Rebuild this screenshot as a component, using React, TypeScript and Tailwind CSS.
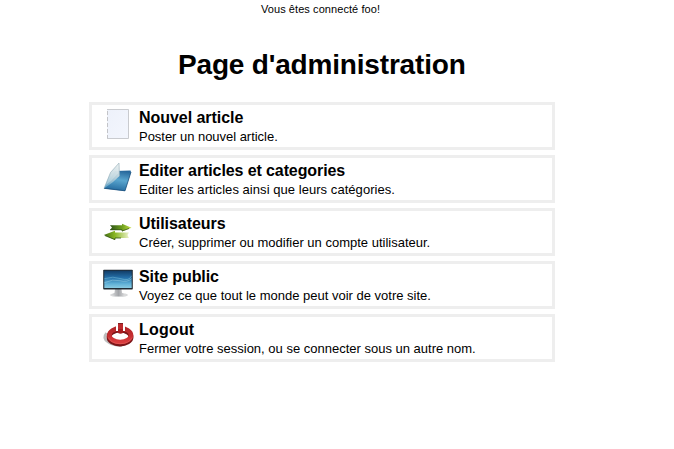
import type { ReactNode } from 'react';

function PageIcon() {
  return (
    <svg viewBox="0 0 30 32" className="h-8 w-[30px]">
      <defs>
        <linearGradient id="paper" x1="0" y1="0" x2="1" y2="1">
          <stop offset="0" stopColor="#edf1fa" />
          <stop offset="1" stopColor="#f3f6fd" />
        </linearGradient>
      </defs>
      <rect x="4" y="2" width="22" height="29" fill="url(#paper)" />
      <path d="M4 2.5H25.5V31.5H4" fill="none" stroke="#c9cbcf" strokeWidth="1" />
      <path d="M4.5 4V31" stroke="#c3c4c8" strokeWidth="1" strokeDasharray="4 2" />
    </svg>
  );
}

function FolderIcon() {
  return (
    <svg viewBox="0 0 30 32" className="h-8 w-[30px]">
      <defs>
        <linearGradient id="back" x1="0.6" y1="0" x2="0.4" y2="1">
          <stop offset="0" stopColor="#27689c" />
          <stop offset="0.45" stopColor="#5aa6cf" />
          <stop offset="1" stopColor="#22689d" />
        </linearGradient>
        <linearGradient id="flap" x1="0.8" y1="0" x2="0.2" y2="1">
          <stop offset="0" stopColor="#e2eaec" />
          <stop offset="0.5" stopColor="#b3cdd8" />
          <stop offset="1" stopColor="#62a4c8" />
        </linearGradient>
      </defs>
      <path d="M12 11 27.5 10.5 28 12 22 31 1 28.5Z" fill="url(#back)" />
      <path d="M1 28.3 22 30.8 28 12" fill="none" stroke="#174d7b" strokeWidth="0.8" />
      <path d="M1 28.5 7.5 12.5 16 3 16.5 16 10 22Z" fill="url(#flap)" opacity="0.95" />
      <path d="M7.5 12.5 16 3 15.5 13 8 21 3 25Z" fill="#eef3f4" opacity="0.35" />
      <path d="M1 28.5 7.5 12.5 16 3 16.5 16" fill="none" stroke="#96afb8" strokeWidth="0.6" />
    </svg>
  );
}

function ArrowsIcon() {
  return (
    <svg viewBox="0 0 30 32" className="h-8 w-[30px]">
      <defs>
        <linearGradient id="right">
          <stop offset="0" stopColor="#2d5216" />
          <stop offset="0.55" stopColor="#6b9d1c" />
          <stop offset="1" stopColor="#c6df45" />
        </linearGradient>
        <linearGradient id="left">
          <stop offset="0" stopColor="#416d12" />
          <stop offset="0.45" stopColor="#8bb825" />
          <stop offset="1" stopColor="#eaf1c8" />
        </linearGradient>
      </defs>
      <path d="M7 12.3H19V10.8L28.5 14.8 19 18.5V17H7L9 14.5Z" fill="url(#right)" />
      <path d="M7 16.8H19V18L26 15.5" fill="none" stroke="#304d18" strokeWidth="0.7" />
      <path d="M0.8 22 12 17.8V19.5H26L24.5 22 26 25H12V27Z" fill="url(#left)" />
      <path d="M2 22.6 12 26.6V25H18" fill="none" stroke="#31540f" strokeWidth="0.8" />
    </svg>
  );
}

function MonitorIcon() {
  return (
    <svg viewBox="0 -1.7 30 32" className="h-8 w-[30px]">
      <defs>
        <linearGradient id="screen" x1="0" y1="0" x2="0" y2="1">
          <stop offset="0" stopColor="#123c66" />
          <stop offset="0.4" stopColor="#246fa8" />
          <stop offset="0.75" stopColor="#5fb0d6" />
          <stop offset="1" stopColor="#8acbe2" />
        </linearGradient>
        <linearGradient id="stand">
          <stop offset="0" stopColor="#d8d9da" />
          <stop offset="0.5" stopColor="#a4a6aa" />
          <stop offset="1" stopColor="#e0e0e1" />
        </linearGradient>
      </defs>
      <ellipse cx="16" cy="27.3" rx="9" ry="2" fill="#d9dadb" />
      <path d="M12 21H18.5L19 25 22.5 27Q16 30 8.5 27L11.5 25Z" fill="url(#stand)" />
      <rect x="0.2" y="2" width="29.6" height="19.8" rx="0.8" fill="#202a33" />
      <rect x="1.3" y="3" width="27.4" height="17.3" fill="url(#screen)" />
      <path d="M1.3 11Q10 8 18 11T28.7 8" fill="none" stroke="#8fd1e4" strokeWidth="0.8" opacity="0.5" />
      <path d="M1.3 15Q10 11 17 13T28.7 11" fill="none" stroke="#c0e8ef" strokeWidth="0.7" opacity="0.5" />
    </svg>
  );
}

function PowerIcon() {
  return (
    <svg viewBox="0 0 30 32" className="h-8 w-[30px] overflow-visible">
      <defs>
        <linearGradient id="ring" x1="0" y1="0" x2="0" y2="1">
          <stop offset="0" stopColor="#b3272a" />
          <stop offset="0.5" stopColor="#c42d30" />
          <stop offset="1" stopColor="#d93c3e" />
        </linearGradient>
      </defs>
      <path d="M3.5 14Q-1 19 5 23Q11 27 19 26.5" fill="none" stroke="#bdbdbd" strokeWidth="2.5" />
      <ellipse cx="17" cy="18" rx="11" ry="7" fill="none" stroke="#7b1518" strokeWidth="5" />
      <ellipse cx="17.2" cy="16.2" rx="10.8" ry="6.8" fill="none" stroke="url(#ring)" strokeWidth="4.6" />
      <path d="M5.5 18.5Q8 24.5 17 24.7T29 18.5" fill="none" stroke="#ec706b" strokeWidth="0.8" opacity="0.5" />
      <path d="M13 6H22V12H13Z" fill="#ffffff" />
      <path d="M15 4H20V14Q17.5 15.5 15 14Z" fill="#a61c20" />
      <path d="M15 4H20V10H15Z" fill="#bd2b2e" />
      <path d="M15 4.5H20" stroke="#822023" strokeWidth="1" />
    </svg>
  );
}

type Item = { title: string; text: string; icon: ReactNode; titleTrack: string; textTrack: string };

const items: Item[] = [
  { title: 'Nouvel article', text: 'Poster un nouvel article.', icon: <PageIcon />, titleTrack: 'tracking-[-0.05px]', textTrack: 'tracking-[-0.03px]' },
  { title: 'Editer articles et categories', text: 'Editer les articles ainsi que leurs catégories.', icon: <FolderIcon />, titleTrack: 'tracking-[-0.1px]', textTrack: 'tracking-[0.05px]' },
  { title: 'Utilisateurs', text: 'Créer, supprimer ou modifier un compte utilisateur.', icon: <ArrowsIcon />, titleTrack: 'tracking-[-0.05px]', textTrack: 'tracking-[0px]' },
  { title: 'Site public', text: 'Voyez ce que tout le monde peut voir de votre site.', icon: <MonitorIcon />, titleTrack: 'tracking-[-0.1px]', textTrack: 'tracking-[0px]' },
  { title: 'Logout', text: 'Fermer votre session, ou se connecter sous un autre nom.', icon: <PowerIcon />, titleTrack: 'tracking-[0.2px]', textTrack: 'tracking-[0px]' },
];

export default function App() {
  return (
    <div className="h-[449px] w-[674px] overflow-hidden bg-white font-['Liberation_Sans',Arial,sans-serif] text-black">
      <p className="h-[47px] pt-0.5 pl-[261px] text-[11px] leading-[14px] tracking-[0.07px]">Vous êtes connecté foo!</p>
      <h1 className="h-[55px] pl-[178px] text-[28px] leading-9 font-bold tracking-[-0.18px] whitespace-nowrap">Page d'administration</h1>
      <ul className="ml-[89px] flex w-[466px] flex-col gap-[5px]">
        {items.map((item) => (
          <li key={item.title} className="flex h-12 border-3 border-[#eeeeee] pl-[11px]">
            <div className="mt-0.5 w-9 shrink-0">{item.icon}</div>
            <div className="whitespace-nowrap">
              <h2 className={`mt-[3px] text-[16px] leading-[19px] font-bold ${item.titleTrack}`}>{item.title}</h2>
              <p className={`mt-px text-[13px] leading-[17px] ${item.textTrack}`}>{item.text}</p>
            </div>
          </li>
        ))}
      </ul>
    </div>
  );
}
